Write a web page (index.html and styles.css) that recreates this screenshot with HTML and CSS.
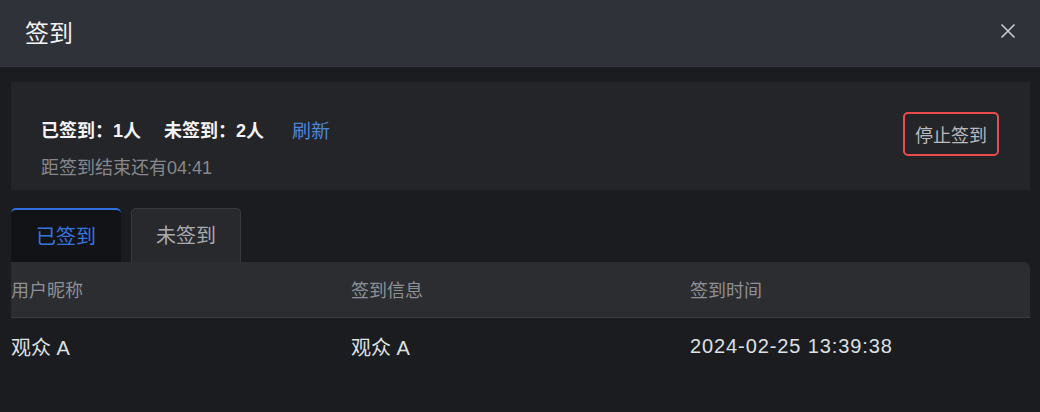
FILE: index.html
```html
<!DOCTYPE html>
<html lang="zh">
<head>
<meta charset="utf-8">
<link rel="stylesheet" href="styles.css">
</head>
<body>
<div class="dialog">
  <div class="header">
    <div class="title">签到</div>
    <svg class="close" width="16" height="16" viewBox="0 0 16 16"><path d="M1.5 1.5 L14.5 14.5 M14.5 1.5 L1.5 14.5" stroke="#c9ccd1" stroke-width="1.6" fill="none"/></svg>
  </div>
  <div class="body">
    <div class="card">
      <div class="info">
        <div class="stats">
          <span class="stat">已签到：1人</span>
          <span class="stat">未签到：2人</span>
          <span class="refresh">刷新</span>
        </div>
        <div class="countdown">距签到结束还有04:41</div>
      </div>
      <div class="stop">停止签到</div>
    </div>
    <div class="tabs">
      <div class="tab active">已签到</div>
      <div class="tab">未签到</div>
    </div>
    <div class="table">
      <div class="row head">
        <div class="cell">用户昵称</div>
        <div class="cell">签到信息</div>
        <div class="cell">签到时间</div>
      </div>
      <div class="row">
        <div class="cell">观众 A</div>
        <div class="cell">观众 A</div>
        <div class="cell date">2024-02-25 13:39:38</div>
      </div>
    </div>
  </div>
</div>
</body>
</html>
```

FILE: styles.css
```css
* { box-sizing: border-box; }
html, body { margin: 0; padding: 0; }
body {
  width: 1040px;
  height: 412px;
  background: #1b1c20;
  font-family: "Liberation Sans", "Noto Sans CJK SC", sans-serif;
  overflow: hidden;
}
.header {
  height: 67px;
  background: #2f3238;
  border-bottom: 1px solid #383b41;
  display: flex;
  align-items: center;
  justify-content: space-between;
  padding: 0 25px 4px 25px;
}
.title {
  color: #f2f3f5;
  font-size: 24px;
}
.close { margin-right: -1px; }
.body {
  padding: 15px 10px 0 11px;
}
.card {
  height: 108px;
  background: #242528;
  display: flex;
  align-items: center;
  justify-content: space-between;
  padding: 0 31px 0 30px;
}
.info { display: flex; flex-direction: column; gap: 10px; padding-top: 22px; }
.stats { display: flex; align-items: center; }
.stat {
  color: #f4f4f6;
  font-size: 18px;
  font-weight: bold;
  margin-right: 23px;
}
.refresh {
  color: #4d84dc;
  font-size: 19px;
  margin-left: 5px;
}
.countdown {
  color: #86888d;
  font-size: 18px;
}
.stop {
  width: 96px;
  height: 44px;
  border: 2px solid #ea4b4f;
  border-radius: 5px;
  color: #b9babe;
  font-size: 18px;
  display: flex;
  align-items: center;
  justify-content: center;
  margin-bottom: 5px;
}
.tabs {
  display: flex;
  gap: 10px;
  margin-top: 18px;
  height: 54px;
}
.tab {
  width: 110px;
  display: flex;
  align-items: center;
  justify-content: center;
  font-size: 20px;
  color: #a9abaf;
  background: #28292c;
  border: 1px solid #393a3e;
  border-bottom: none;
  border-radius: 5px 5px 0 0;
  padding-bottom: 2px;
}
.tab.active {
  background: #121316;
  color: #3475e0;
  border: none;
  border-top: 2px solid #2f6fe0;
}
.table { width: 1019px; }
.row {
  display: grid;
  grid-template-columns: 340px 339px 340px;
  height: 60px;
  align-items: center;
  color: #dfe0e3;
  font-size: 20px;
  padding-bottom: 3px;
}
.row.head {
  height: 56px;
  background: #2c2d31;
  border-bottom: 1px solid #3a3b3f;
  border-radius: 0 6px 0 0;
  color: #8e9095;
  font-size: 18px;
  padding-bottom: 2px;
}
.date { letter-spacing: 0.9px; }
```
